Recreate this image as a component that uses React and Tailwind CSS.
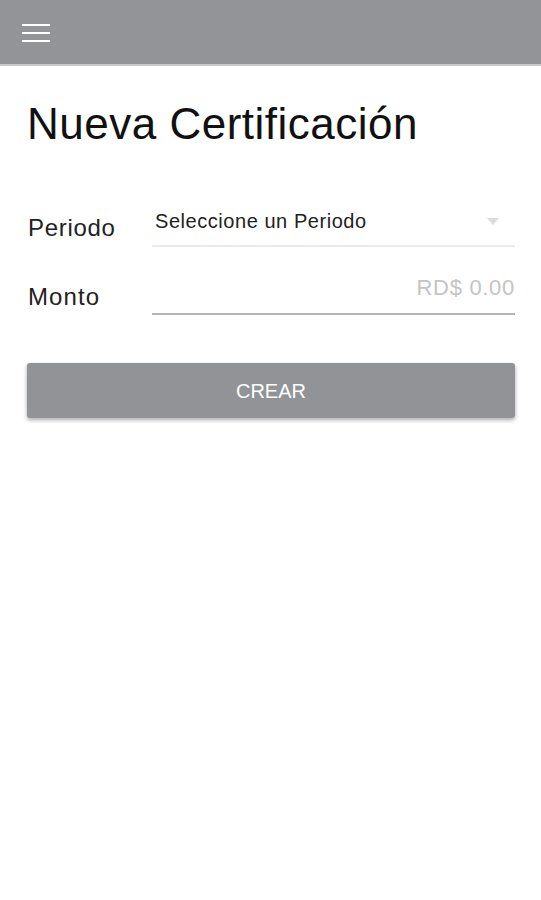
import React from 'react'

export default function App() {
  return (
    <div className="min-h-[900px] w-full bg-white" style={{ fontFamily: '"Liberation Sans", Arial, sans-serif' }}>
      {/* Top bar */}
      <header className="h-[66px] bg-[#939497] border-b-2 border-[#c9c9c9] flex items-center px-[22px]">
        <button className="flex flex-col gap-[6px] w-[28px] mt-[1px]">
          <span className="block h-[2px] w-full bg-white" />
          <span className="block h-[2px] w-full bg-white" />
          <span className="block h-[2px] w-full bg-white" />
        </button>
      </header>

      <main className="pl-[27px] pr-[26px]">
        <h1 className="mt-[30px] text-[44px] leading-[56px] text-[#111] tracking-[0.5px]">Nueva Certificación</h1>

        {/* Periodo */}
        <div className="mt-[51px] flex items-end">
          <label className="w-[125px] text-[24px] leading-[30px] text-[#222] pb-[4px] pl-[1px] tracking-[0.7px]">Periodo</label>
          <div className="flex-1 flex items-center justify-between h-[44px] border-b-2 border-[#ebebeb] pl-[3px] pr-[16px]">
            <span className="text-[20px] text-[#222] -mt-[6px] tracking-[0.55px]">Seleccione un Periodo</span>
            <span className="block w-0 h-0 border-l-[6px] border-r-[6px] border-t-[7px] border-l-transparent border-r-transparent border-t-[#dcdcdc] -mt-[6px]" />
          </div>
        </div>

        {/* Monto */}
        <div className="mt-[22px] flex items-end">
          <label className="w-[125px] text-[24px] leading-[30px] text-[#222] pb-[3px] pl-[1px] tracking-[1.1px]">Monto</label>
          <div className="flex-1 flex items-center justify-end h-[46px] border-b-2 border-[#b4b4b4]">
            <span className="text-[22px] text-[#c4c4c4] -mt-[8px] tracking-[0.7px]">RD$ 0.00</span>
          </div>
        </div>

        <button className="mt-[48px] w-full h-[55px] rounded-[3px] bg-[#929396] text-white text-[20px] shadow-[0_2px_4px_rgba(0,0,0,0.35)]">
          CREAR
        </button>
      </main>
    </div>
  )
}
